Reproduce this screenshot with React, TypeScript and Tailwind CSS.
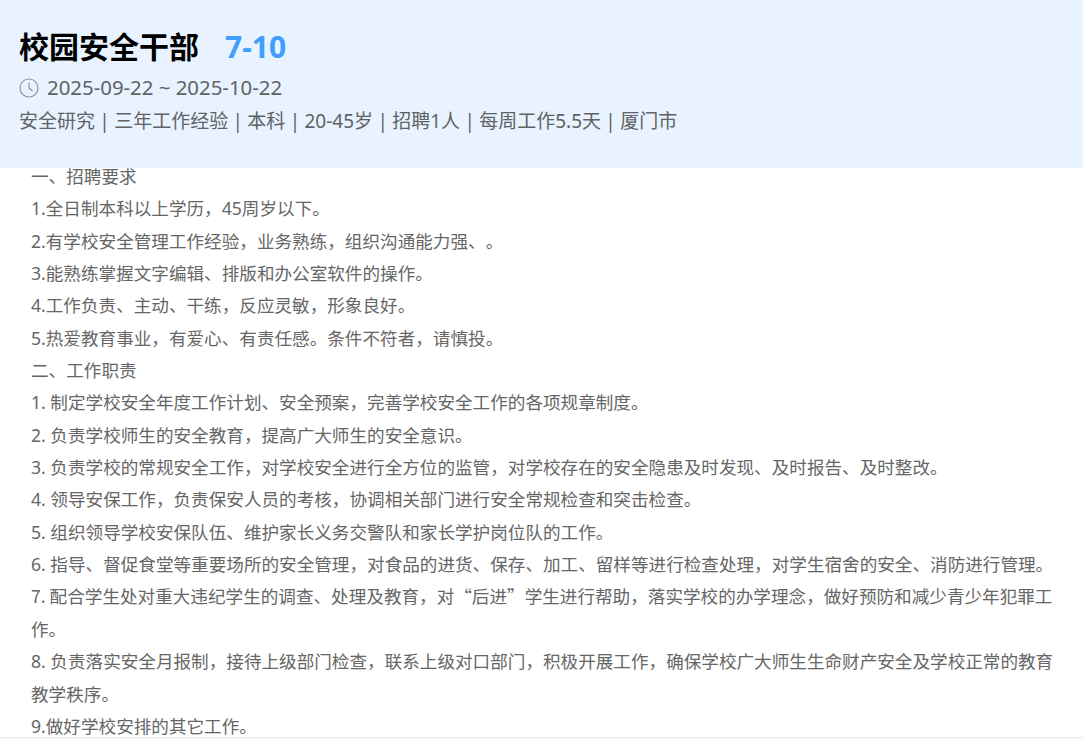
const lines: React.ReactNode[] = [
  '一、招聘要求',
  '1.全日制本科以上学历，45周岁以下。',
  '2.有学校安全管理工作经验，业务熟练，组织沟通能力强、。',
  '3.能熟练掌握文字编辑、排版和办公室软件的操作。',
  '4.工作负责、主动、干练，反应灵敏，形象良好。',
  '5.热爱教育事业，有爱心、有责任感。条件不符者，请慎投。',
  '二、工作职责',
  '1. 制定学校安全年度工作计划、安全预案，完善学校安全工作的各项规章制度。',
  '2. 负责学校师生的安全教育，提高广大师生的安全意识。',
  '3. 负责学校的常规安全工作，对学校安全进行全方位的监管，对学校存在的安全隐患及时发现、及时报告、及时整改。',
  '4. 领导安保工作，负责保安人员的考核，协调相关部门进行安全常规检查和突击检查。',
  '5. 组织领导学校安保队伍、维护家长义务交警队和家长学护岗位队的工作。',
  '6. 指导、督促食堂等重要场所的安全管理，对食品的进货、保存、加工、留样等进行检查处理，对学生宿舍的安全、消防进行管理。',
  // the curly quotes have to come from the CJK font to get their full width
  <span className="font-['Noto_Sans_CJK_SC']">7. 配合学生处对重大违纪学生的调查、处理及教育，对“后进”学生进行帮助，落实学校的办学理念，做好预防和减少青少年犯罪工作。</span>,
  '8. 负责落实安全月报制，接待上级部门检查，联系上级对口部门，积极开展工作，确保学校广大师生生命财产安全及学校正常的教育教学秩序。',
  '9.做好学校安排的其它工作。',
];

export default function App() {
  return (
    <div lang="zh-CN" className="h-[741px] overflow-hidden bg-[#fafafa] font-['Noto_Sans','Noto_Sans_CJK_SC',sans-serif] [text-spacing-trim:space-all]">
      <div className="h-[738px] overflow-hidden border-b border-[#ebeef5] bg-white">
        <header className="h-[168px] bg-[#e8f3ff] pl-[19px] pt-[26px]">
          <div className="flex h-[40px] items-center">
            <h1 className="text-[30px] font-bold text-black">校园安全干部</h1>
            <span className="ml-[26px] text-[30px] font-bold text-[#409eff]">7-10</span>
          </div>
          <div className="mt-[5px] flex h-[32px] items-center gap-[8px] text-[20.4px] text-[#606266]">
            <svg className="translate-y-px" width="20" height="20" viewBox="0 0 20 20" fill="none" stroke="#909399" strokeWidth="1.2">
              <circle cx="10" cy="10" r="9" />
              <path d="M10 4.5V10L13.5 13" />
            </svg>
            <span>2025-09-22 ~ 2025-10-22</span>
          </div>
          <div className="mt-[2px] text-[19px] leading-[32px] text-[#606266] [word-spacing:-0.6px]">
            安全研究 | 三年工作经验 | 本科 | 20-45岁 | 招聘1人 | 每周工作5.5天 | 厦门市
          </div>
        </header>
        <main className="-mt-[8px] pl-[31px] pr-[28px] text-[17.6px] leading-[32.35px] text-[#666666]">
          {lines.map((line, i) => (
            <p key={i}>{line}</p>
          ))}
        </main>
      </div>
    </div>
  );
}
